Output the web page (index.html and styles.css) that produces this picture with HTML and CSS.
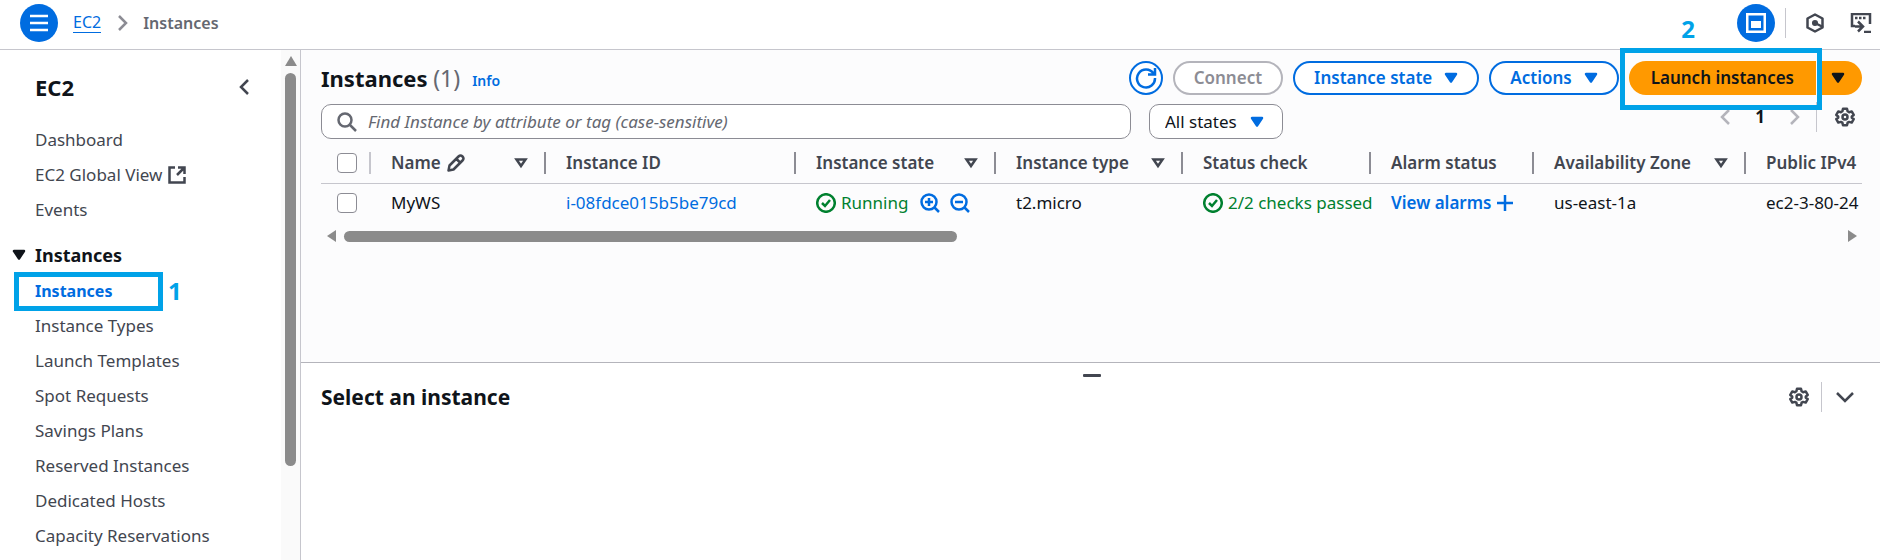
FILE: index.html
```html
<!DOCTYPE html>
<html lang="en">
<head>
<meta charset="utf-8">
<title>Instances | EC2</title>
<link rel="stylesheet" href="styles.css">
</head>
<body>
<svg class="defs" aria-hidden="true">
  <symbol id="gear" viewBox="0 0 20 20"><path d="M8 1.8h4l.6 2.5 1.5.9 2.6-.8 2 3.5-1.9 1.5v1.3l1.9 1.4-2 3.5-2.6-.7-1.5.8-.6 2.5H8l-.6-2.500-1.500-.8-2.600.7-2-3.500 1.900-1.400V9.400L1.300 7.900l2-3.500 2.600.8 1.500-.9z" stroke-linejoin="round"/><circle cx="10" cy="10" r="2.500"/></symbol>
  <symbol id="caret" viewBox="0 0 14 12"><path d="M1.500 1.500h11L7 10.500z" fill="currentColor" stroke="none"/><path d="M2 2h10L7 9.500z" stroke-linejoin="round"/></symbol>
  <symbol id="sort" viewBox="0 0 14 12"><path d="M2.500 2.500h9L7 9z"/></symbol>
  <symbol id="ok" viewBox="0 0 20 20"><circle cx="10" cy="10" r="8.800"/><path d="M6 10l3 3 5-6"/></symbol>
  <symbol id="left" viewBox="0 0 12 16"><path d="M10 1L3 8l7 7"/></symbol>
  <symbol id="right" viewBox="0 0 12 16"><path d="M2 1l7 7-7 7"/></symbol>
</svg>
<header class="topbar">
  <button class="round menu" aria-label="Open menu"><svg class="icon" width="20" height="20" viewBox="0 0 20 20"><path d="M1 3h18M1 10h18M1 17h18"/></svg></button>
  <nav class="crumbs" aria-label="Breadcrumbs">
    <a href="#">EC2</a>
    <svg class="icon crumb-sep" width="12" height="16"><use href="#right"/></svg>
    <span>Instances</span>
  </nav>
  <div class="tools">
    <span class="mark mark-two">2</span>
    <button class="round" aria-label="Split panel"><svg class="icon" width="20" height="20" viewBox="0 0 20 20"><path d="M1.250 1.250h17.500v17.500H1.250z"/><path d="M5 8h10v7H5z" fill="currentColor" stroke="none"/></svg></button>
    <span class="rule"></span>
    <button class="plain" aria-label="Diagnostics"><svg class="icon" width="20" height="20" viewBox="0 0 20 20"><path d="M10 1.500l7.500 4v9l-7.500 4-7.500-4v-9z" stroke-linejoin="round"/><path d="M10 10l8 4"/><circle cx="10" cy="10" r="1.800" fill="currentColor"/></svg></button>
    <button class="plain" aria-label="CloudShell"><svg class="icon" width="22" height="20" viewBox="0 0 22 20"><path d="M5 13H2V1h18v10M5 5h2.500M9 5h2.500M13 5h2.500M5 13.500h7M8 8.500l5 5-5 5M14 19h7"/></svg></button>
  </div>
</header>
<div class="shell">
  <aside class="sidebar">
    <nav class="side-nav" aria-label="EC2">
      <div class="side-head"><h2>EC2</h2><button class="plain" aria-label="Close navigation"><svg class="icon" width="12" height="16"><use href="#left"/></svg></button></div>
      <ul>
        <li><a href="#">Dashboard</a></li>
        <li><a href="#">EC2 Global View <svg class="icon" width="18" height="18" viewBox="0 0 18 18"><path d="M7 1.500H1.500v15h15V11M10 1.500h6.500V8M16 2L9 9"/></svg></a></li>
        <li><a href="#">Events</a></li>
      </ul>
      <button class="section"><svg class="icon" width="14" height="12"><use href="#caret"/></svg>Instances</button>
      <ul>
        <li class="current"><a href="#" aria-current="page">Instances</a><span class="outline"></span><span class="mark mark-one">1</span></li>
        <li><a href="#">Instance Types</a></li>
        <li><a href="#">Launch Templates</a></li>
        <li><a href="#">Spot Requests</a></li>
        <li><a href="#">Savings Plans</a></li>
        <li><a href="#">Reserved Instances</a></li>
        <li><a href="#">Dedicated Hosts</a></li>
        <li><a href="#">Capacity Reservations</a></li>
      </ul>
    </nav>
    <div class="vbar"><span class="arrow-up"></span><span class="vthumb"></span></div>
  </aside>
  <main class="main">
    <section class="list">
      <div class="title-row">
        <h1>Instances <span>(1)</span></h1><a class="info" href="#">Info</a>
        <div class="actions">
          <button class="pill refresh" aria-label="Refresh"><svg class="icon" width="22" height="22" viewBox="0 0 22 22"><path d="M18.500 6.500A9 9 0 1 0 20 11M20 1v6.500h-7"/></svg></button>
          <button class="pill" disabled>Connect</button>
          <button class="pill">Instance state <svg class="icon" width="14" height="12"><use href="#caret"/></svg></button>
          <button class="pill">Actions <svg class="icon" width="14" height="12"><use href="#caret"/></svg></button>
          <div class="launch">
            <button class="launch-main">Launch instances</button>
            <button class="launch-more" aria-label="More launch options"><svg class="icon" width="14" height="12"><use href="#caret"/></svg></button>
            <span class="outline"></span>
          </div>
        </div>
      </div>
      <div class="filter-row">
        <label class="search"><svg class="icon" width="20" height="20" viewBox="0 0 20 20"><circle cx="8" cy="8" r="6.500"/><path d="M13 13l6 6"/></svg><input type="text" aria-label="Find Instance" placeholder="Find Instance by attribute or tag (case-sensitive)"></label>
        <label class="states"><select aria-label="State filter"><option>All states</option></select><svg class="icon" width="14" height="12"><use href="#caret"/></svg></label>
        <div class="pager">
          <button class="plain" disabled aria-label="Previous page"><svg class="icon" width="12" height="16"><use href="#left"/></svg></button>
          <button class="plain page">1</button>
          <button class="plain" disabled aria-label="Next page"><svg class="icon" width="12" height="16"><use href="#right"/></svg></button>
          <span class="rule"></span>
          <button class="plain" aria-label="Preferences"><svg class="icon" width="20" height="20"><use href="#gear"/></svg></button>
        </div>
      </div>
      <div class="table-wrap">
        <table>
          <colgroup><col class="c-check"><col class="c-name"><col class="c-id"><col class="c-state"><col class="c-type"><col class="c-status"><col class="c-alarm"><col class="c-zone"><col></colgroup>
          <thead><tr>
            <th><input type="checkbox" aria-label="Select all"></th>
            <th><div>Name <svg class="icon" width="18" height="18" viewBox="0 0 18 18"><path d="M1.500 16.500L2.500 11.500 11.500 2.500q2-2 4 0t0 4L6.500 15.500zM9.500 5l3.500 3.500" stroke-linejoin="round"/></svg><svg class="icon sort" width="14" height="12"><use href="#sort"/></svg></div></th>
            <th><div>Instance ID</div></th>
            <th><div>Instance state <svg class="icon sort" width="14" height="12"><use href="#sort"/></svg></div></th>
            <th><div>Instance type <svg class="icon sort" width="14" height="12"><use href="#sort"/></svg></div></th>
            <th><div>Status check</div></th>
            <th><div>Alarm status</div></th>
            <th><div>Availability Zone <svg class="icon sort" width="14" height="12"><use href="#sort"/></svg></div></th>
            <th><div>Public IPv4</div></th>
          </tr></thead>
          <tbody><tr>
            <td><input type="checkbox" aria-label="Select MyWS"></td>
            <td>MyWS</td>
            <td><a href="#">i-08fdce015b5be79cd</a></td>
            <td><div class="status"><svg class="icon" width="20" height="20"><use href="#ok"/></svg><span>Running</span>
              <button class="plain zoom-in" aria-label="Filter in"><svg class="icon" width="20" height="20" viewBox="0 0 20 20"><circle cx="9" cy="9" r="7.500"/><path d="M14.500 14.500l4.500 4.500M5 9h8M9 5v8"/></svg></button>
              <button class="plain" aria-label="Filter out"><svg class="icon" width="20" height="20" viewBox="0 0 20 20"><circle cx="9" cy="9" r="7.500"/><path d="M14.500 14.500l4.500 4.500M5 9h8"/></svg></button></div></td>
            <td>t2.micro</td>
            <td><div class="status"><svg class="icon" width="20" height="20"><use href="#ok"/></svg><span>2/2 checks passed</span></div></td>
            <td><a class="alarms" href="#">View alarms <svg class="icon" width="16" height="16" viewBox="0 0 16 16"><path d="M0 8h16M8 0v16"/></svg></a></td>
            <td>us-east-1a</td>
            <td>ec2-3-80-24</td>
          </tr></tbody>
        </table>
      </div>
      <div class="hbar"><span class="arrow-left"></span><span class="track"><span class="hthumb"></span></span><span class="arrow-right"></span></div>
    </section>
    <section class="split">
      <span class="handle"></span>
      <div class="split-head">
        <h2>Select an instance</h2>
        <button class="plain" aria-label="Panel preferences"><svg class="icon" width="20" height="20"><use href="#gear"/></svg></button>
        <span class="rule"></span>
        <button class="plain" aria-label="Close panel"><svg class="icon" width="18" height="12" viewBox="0 0 18 12"><path d="M1 2l8 8 8-8"/></svg></button>
      </div>
    </section>
  </main>
</div>
</body>
</html>
```
FILE: styles.css
```css
* { box-sizing: border-box; }
body {
  margin: 0;
  height: 100vh;
  display: flex;
  flex-direction: column;
  overflow: hidden;
  background: #fff;
  color: #0f141a;
  font: 17px/24px "Noto Sans", "Open Sans", sans-serif;
}
button, input, select { font: inherit; color: inherit; }
button { cursor: pointer; }
a { color: #006ce0; text-decoration: none; }
h1, h2, ul { margin: 0; padding: 0; }
ul { list-style: none; }
.defs { position: absolute; width: 0; height: 0; }
.icon { fill: none; stroke: currentColor; stroke-width: 2.5; flex: none; display: block; }
.plain { border: 0; padding: 0; background: none; display: flex; color: #424650; }
.rule { width: 1px; height: 30px; background: #c6c6cd; }

.topbar {
  display: flex;
  align-items: center;
  height: 50px;
  flex: none;
  padding: 0 8px 4px 20px;
  border-bottom: 1px solid #c6c6cd;
}
.round {
  display: grid;
  place-items: center;
  width: 38px;
  height: 38px;
  padding: 0;
  border: 0;
  border-radius: 50%;
  background: #006ce0;
  color: #fff;
}
.crumbs { display: flex; align-items: center; margin-left: 15px; font-size: 16px; }
.crumbs a { line-height: 20px; border-bottom: 1px solid; }
.crumbs span { color: #656871; font-weight: 600; }
.crumb-sep { margin: 0 14px 0 16px; color: #8c8c94; }
.tools { display: flex; align-items: center; margin-left: auto; }
.tools .rule { margin: 0 19px 0 10px; }
.tools .plain + .plain { margin-left: 25px; }
.mark { color: #00a2e8; font-size: 24px; font-weight: 700; }
.mark-two { margin: 12px 42px 0 0; }

.shell { display: flex; flex: 1; min-height: 0; }
.sidebar { display: flex; width: 301px; flex: none; border-right: 1px solid #c6c6cd; }
.side-nav { flex: 1; padding-top: 21px; }
.side-head { display: flex; justify-content: space-between; align-items: center; height: 32px; margin-bottom: 19px; padding: 0 31px 0 35px; }
.side-head h2 { font-size: 22px; }
.side-nav li { position: relative; height: 35px; padding-left: 35px; line-height: 35px; }
.side-nav li a { display: inline-flex; align-items: center; gap: 6px; color: #424650; }
.side-nav .current a { color: #006ce0; font-size: 16px; font-weight: 700; }
.section { display: flex; align-items: center; gap: 9px; height: 46px; padding: 10px 0 0 12px; border: 0; background: none; font-size: 18px; font-weight: 700; }
.outline { position: absolute; border: 5px solid #00a2e8; pointer-events: none; }
.current .outline { inset: -1px 118px -3px 14px; }
.mark-one { position: absolute; left: 168px; top: 0; }
.vbar { display: flex; flex-direction: column; align-items: center; gap: 7px; width: 19px; padding-top: 6px; background: #fafafa; }
.arrow-up { border: 6px solid transparent; border-top: 0; border-bottom: 10px solid #8b8b8b; }
.vthumb { width: 11px; height: 78%; border-radius: 6px; background: #8b8b8b; }

.main { display: flex; flex: 1; flex-direction: column; min-width: 0; }
.list { display: flex; flex-direction: column; flex: none; height: 312px; padding: 11px 18px 0 20px; background: #fcfcfd; }
.title-row { display: flex; align-items: center; height: 34px; }
h1 { font-size: 22px; line-height: 32px; }
h1 span { color: #656871; font-weight: 400; font-size: 23px; }
.info { margin: 6px 0 0 12px; font-size: 14px; font-weight: 600; }
.actions { display: flex; gap: 10px; margin-left: auto; }
.pill {
  display: flex;
  align-items: center;
  gap: 12px;
  height: 34px;
  padding: 0 19px;
  border: 2px solid #006ce0;
  border-radius: 17px;
  background: #fff;
  color: #006ce0;
  font-weight: 600;
}
.pill:disabled { border-color: #b4b4bb; color: #8c8c94; }
.refresh { width: 34px; padding: 0; justify-content: center; }
.launch { position: relative; display: flex; gap: 1px; }
.launch button { height: 34px; border: 0; background: #ff9900; font-weight: 600; }
.launch .launch-main { padding: 0 22px; border-radius: 17px 0 0 17px; }
.launch .launch-more { width: 45px; padding: 0 0 0 14px; border-radius: 0 17px 17px 0; }
.launch .outline { inset: -13px 40px -15px -9px; }

.filter-row { display: flex; align-items: center; height: 35px; margin-top: 9px; }
.search { display: flex; align-items: center; width: 810px; height: 35px; padding: 0 15px; gap: 11px; border: 1px solid #8c8c94; border-radius: 10px; background: #fff; color: #656871; }
.search input { flex: 1; min-width: 0; border: 0; padding: 0; outline: 0; background: none; }
.search input::placeholder { color: #656871; font-style: italic; }
.states { position: relative; margin-left: 18px; color: #006ce0; }
.states select { appearance: none; display: block; width: 134px; height: 35px; padding: 0 15px; border: 1px solid #8c8c94; border-radius: 10px; background: #fff; color: #0f141a; }
.states .icon { position: absolute; right: 19px; top: 12px; pointer-events: none; }
.pager { display: flex; align-items: center; margin-left: auto; padding: 0 7px 9px 0; }
.pager .plain:disabled { color: #b4b4bb; }
.pager .page { width: 58px; justify-content: center; color: #0f141a; font-weight: 700; }
.pager .rule { margin: 0 18px 0 15px; }

.table-wrap { overflow: hidden; margin-top: 4px; }
table { width: 100%; table-layout: fixed; border-collapse: collapse; }
.c-check { width: 50px; }
.c-name { width: 175px; }
.c-id { width: 250px; }
.c-state { width: 200px; }
.c-type { width: 187px; }
.c-status { width: 188px; }
.c-alarm { width: 163px; }
.c-zone { width: 212px; }
th, td { white-space: nowrap; text-align: left; vertical-align: middle; height: 40px; padding: 0 0 0 20px; }
th:first-child, td:first-child { padding-left: 16px; }
th { border-bottom: 1px solid #c6c6cd; color: #424650; font-weight: 600; }
th div { display: flex; align-items: center; gap: 6px; height: 22px; padding-right: 16px; border-right: 2px solid #8c8c94; }
th:last-child div { border: 0; padding: 0; }
th:first-child { background: linear-gradient(#c6c6cd, #c6c6cd) right center / 2px 22px no-repeat; }
.sort { margin-left: auto; }
input[type="checkbox"] { appearance: none; display: block; width: 20px; height: 20px; margin: 0; border: 1px solid #8c8c94; border-radius: 4px; background: #fff; }
.status { display: flex; align-items: center; color: #00802f; }
.status span { margin-left: 5px; }
.status .plain { margin-left: 10px; color: #006ce0; }
.status .zoom-in { margin-left: 12px; }
.alarms { display: flex; align-items: center; gap: 6px; font-weight: 600; }

.hbar { display: flex; align-items: center; height: 12px; margin-top: 7px; padding: 0 5px 0 6px; }
.track { flex: 1; margin: 0 8px; }
.hthumb { display: block; width: 41%; height: 11px; border-radius: 6px; background: #8b8b8b; }
.arrow-left { border: 6px solid transparent; border-left: 0; border-right: 9px solid #8b8b8b; }
.arrow-right { border: 6px solid transparent; border-right: 0; border-left: 9px solid #8b8b8b; }

.split { flex: 1; border-top: 1px solid #b4b4bb; padding: 11px 18px 0 20px; }
.handle { display: block; width: 18px; height: 3px; margin: 0 auto; border-radius: 1px; background: #424650; }
.split-head { display: flex; align-items: center; height: 30px; margin-top: 5px; padding-right: 8px; }
.split-head h2 { flex: 1; font-size: 21px; }
.split-head .rule { margin: 0 14px 0 12px; }
```
